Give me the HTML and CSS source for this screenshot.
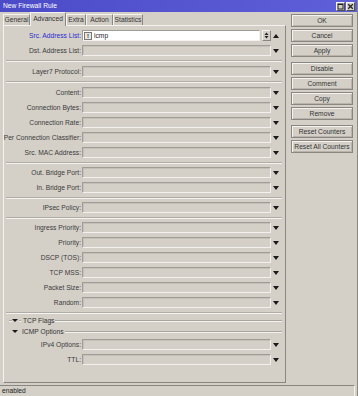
FILE: index.html
```html
<!DOCTYPE html>
<html>
<head>
<meta charset="utf-8">
<link rel="stylesheet" href="styles.css">
</head>
<body>
<div class="win">
  <div class="titlebar">
    <span class="title">New Firewall Rule</span>
    <div class="wbtns">
      <span class="wb"><svg width="7" height="7" viewBox="0 0 7 7"><rect x="1" y="1" width="5" height="5" fill="none" stroke="#222" stroke-width="1"/><line x1="1" y1="1.5" x2="6" y2="1.5" stroke="#222" stroke-width="1"/></svg></span>
      <span class="wb"><svg width="7" height="7" viewBox="0 0 7 7"><path d="M1.2 1.2L5.8 5.8M5.8 1.2L1.2 5.8" stroke="#222" stroke-width="1.3"/></svg></span>
    </div>
  </div>
  <div class="main">
    <div class="left">
      <div class="tabs">
        <span class="tab t-gen">General</span>
        <span class="tab t-adv active">Advanced</span>
        <span class="tab t-ext">Extra</span>
        <span class="tab t-act">Action</span>
        <span class="tab t-sta">Statistics</span>
      </div>
      <div class="panel">
        <div class="row"><span class="lbl blue">Src. Address List:</span><span class="field white"><span class="neg">!</span><span class="val">icmp</span></span><span class="spin"><svg width="5" height="7" viewBox="0 0 5 7"><path d="M2.5 0.5L4.5 3H0.5Z M2.5 6.5L4.5 4H0.5Z" fill="#222"/></svg></span><span class="arr up"></span></div>
        <div class="row"><span class="lbl">Dst. Address List:</span><span class="field wide"></span><span class="arr"></span></div>
        <div class="sep wide-gap"></div>
        <div class="row"><span class="lbl">Layer7 Protocol:</span><span class="field wide"></span><span class="arr"></span></div>
        <div class="sep wide-gap"></div>
        <div class="row"><span class="lbl">Content:</span><span class="field wide"></span><span class="arr"></span></div>
        <div class="row"><span class="lbl">Connection Bytes:</span><span class="field wide"></span><span class="arr"></span></div>
        <div class="row"><span class="lbl">Connection Rate:</span><span class="field wide"></span><span class="arr"></span></div>
        <div class="row"><span class="lbl">Per Connection Classifier:</span><span class="field wide"></span><span class="arr"></span></div>
        <div class="row"><span class="lbl">Src. MAC Address:</span><span class="field wide"></span><span class="arr"></span></div>
        <div class="sep"></div>
        <div class="row"><span class="lbl">Out. Bridge Port:</span><span class="field wide"></span><span class="arr"></span></div>
        <div class="row"><span class="lbl">In. Bridge Port:</span><span class="field wide"></span><span class="arr"></span></div>
        <div class="sep"></div>
        <div class="row"><span class="lbl">IPsec Policy:</span><span class="field wide"></span><span class="arr"></span></div>
        <div class="sep"></div>
        <div class="row"><span class="lbl">Ingress Priority:</span><span class="field wide"></span><span class="arr"></span></div>
        <div class="row"><span class="lbl">Priority:</span><span class="field wide"></span><span class="arr"></span></div>
        <div class="row"><span class="lbl">DSCP (TOS):</span><span class="field wide"></span><span class="arr"></span></div>
        <div class="row"><span class="lbl">TCP MSS:</span><span class="field wide"></span><span class="arr"></span></div>
        <div class="row"><span class="lbl">Packet Size:</span><span class="field wide"></span><span class="arr"></span></div>
        <div class="row"><span class="lbl">Random:</span><span class="field wide"></span><span class="arr"></span></div>
        <div class="sep"></div>
        <div class="section first"><span class="lead"></span><span class="tri"></span><span class="mid"></span><span class="stext">TCP Flags</span><span class="line"></span></div>
        <div class="section"><span class="tri"></span><span class="stext pad">ICMP Options</span><span class="line"></span></div>
        <div class="row"><span class="lbl">IPv4 Options:</span><span class="field wide"></span><span class="arr"></span></div>
        <div class="row"><span class="lbl">TTL:</span><span class="field wide"></span><span class="arr"></span></div>
      </div>
    </div>
    <div class="buttons">
      <div class="bgroup">
        <span class="btn">OK</span>
        <span class="btn">Cancel</span>
        <span class="btn">Apply</span>
      </div>
      <div class="bgroup">
        <span class="btn">Disable</span>
        <span class="btn">Comment</span>
        <span class="btn">Copy</span>
        <span class="btn">Remove</span>
      </div>
      <div class="bgroup">
        <span class="btn">Reset Counters</span>
        <span class="btn">Reset All Counters</span>
      </div>
    </div>
  </div>
  <div class="status">enabled</div>
</div>
</body>
</html>
```
FILE: styles.css
```css
* { box-sizing: border-box; }
html, body { margin: 0; padding: 0; }
body {
  background: #d4d0c8;
  font-family: "Liberation Sans", Arial, sans-serif;
  font-size: 6.7px;
  color: #333;
  width: 358px;
  height: 396px;
  overflow: hidden;
}
.win {
  width: 358px;
  height: 396px;
  display: flex;
  flex-direction: column;
  border-right: 1px solid #8a8780;
}
.titlebar {
  height: 12px;
  flex: none;
  background: linear-gradient(90deg, #4b4bc8, #5f5fd8);
  color: #fff;
  display: flex;
  align-items: center;
  padding: 0 2px 0 3px;
}
.title { flex: 1; line-height: 12px; }
.wbtns { display: flex; gap: 1px; padding-top: 1px; }
.wb {
  width: 9px;
  height: 9px;
  background: #d4d0c8;
  border: 1px solid;
  border-color: #f4f3f0 #505050 #505050 #f4f3f0;
  display: flex;
  align-items: center;
  justify-content: center;
}
.main {
  display: flex;
  height: 372px;
  flex: none;
}
.left {
  width: 286px;
  padding-left: 3px;
  display: flex;
  flex-direction: column;
}
.tabs {
  height: 13px;
  display: flex;
  align-items: flex-end;
  position: relative;
  z-index: 1;
}
.tab {
  height: 11px;
  line-height: 9px;
  padding: 0;
  text-align: center;
  white-space: nowrap;
  border: 1px solid;
  border-bottom: none;
  border-color: #f4f3f0 #8a8780 #8a8780 #f4f3f0;
  background: #d0ccc4;
  color: #333;
}
.t-gen { width: 27px; }
.t-adv { width: 36px; }
.t-ext { width: 20px; }
.t-act { width: 27px; }
.t-sta { width: 30px; }
.tab.active {
  height: 14px;
  line-height: 11px;
  margin-bottom: -1px;
  background: #d4d0c8;
  position: relative;
}
.panel {
  height: 358px;
  border: 1px solid;
  border-color: #f4f3f0 #8a8780 #8a8780 #f4f3f0;
  padding: 4px 0 0 0;
  display: flex;
  flex-direction: column;
  gap: 4px;
}
.row {
  display: flex;
  align-items: center;
  height: 11px;
  flex: none;
}
.lbl {
  width: 77px;
  flex: none;
  display: flex;
  justify-content: flex-end;
  white-space: nowrap;
  color: #3a3a3a;
  margin-right: 1px;
}
.lbl.blue { color: #2a2ad0; }
.field {
  height: 11px;
  border: 1px solid;
  border-color: #a09d96 #f2f1ee #f2f1ee #a09d96;
  box-shadow: inset 1px 1px 0 #c4c0b8;
  background: #d4d0c8;
}
.field.wide { width: 189px; }
.field.white {
  width: 178px;
  background: #fff;
  display: flex;
  align-items: center;
  padding-left: 1px;
  box-shadow: none;
}
.neg {
  width: 8px;
  height: 8px;
  border: 1px solid #777;
  background: #e8e6e2;
  font-size: 6px;
  line-height: 6px;
  text-align: center;
  font-weight: bold;
  color: #222;
}
.val { margin-left: 2px; color: #222; }
.spin {
  width: 9px;
  height: 11px;
  margin-left: 2px;
  border: 1px solid;
  border-color: #f4f3f0 #8a8780 #8a8780 #f4f3f0;
  display: flex;
  align-items: center;
  justify-content: center;
}
.arr {
  width: 0;
  height: 0;
  margin-left: 2px;
  border-left: 3px solid transparent;
  border-right: 3px solid transparent;
  border-top: 4px solid #1a1a1a;
}
.arr.up {
  border-top: none;
  border-bottom: 4px solid #1a1a1a;
}
.sep {
  height: 1px;
  margin: 0 3px 0 2px;
  background: #b0ada6;
  box-shadow: 0 1px 0 #f4f3f0;
  flex: none;
}
.sep.wide-gap { margin-bottom: 1px; }
.section {
  display: flex;
  align-items: center;
  height: 7px;
  flex: none;
  padding: 0 3px 0 5px;
}
.tri {
  width: 0;
  height: 0;
  border-left: 3px solid transparent;
  border-right: 3px solid transparent;
  border-top: 3px solid #1a1a1a;
  flex: none;
  margin-left: 3px;
}
.section.first .tri { margin-left: 0; }
.lead, .mid, .line {
  height: 1px;
  background: #a8a59e;
  box-shadow: 0 1px 0 #f4f3f0;
}
.lead { width: 3px; }
.mid { width: 2px; margin-left: 1px; }
.stext { margin: 0 1px 0 2px; color: #333; white-space: nowrap; }
.stext.pad { margin-left: 4px; }
.line { flex: 1; }
.buttons {
  width: 62px;
  margin-left: 5px;
  padding-top: 2px;
  display: flex;
  flex-direction: column;
  gap: 5px;
}
.bgroup {
  display: flex;
  flex-direction: column;
  gap: 2px;
}
.btn {
  height: 13px;
  border: 1px solid #8a8780;
  box-shadow: inset 1px 1px 0 #f4f3f0, inset -1px -1px 0 #b8b4ac;
  display: flex;
  align-items: center;
  justify-content: center;
  white-space: nowrap;
  color: #333;
}
.status {
  margin-top: 1px;
  height: 11px;
  width: 355px;
  border-top: 1px solid #8a8780;
  border-right: 1px solid #f4f3f0;
  padding-left: 2px;
  line-height: 10px;
  color: #222;
}
```
